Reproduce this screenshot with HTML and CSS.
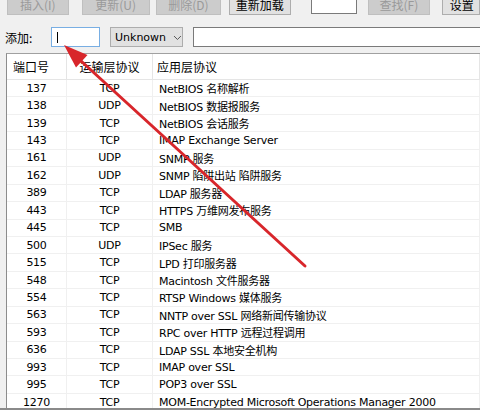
FILE: index.html
```html
<!DOCTYPE html>
<html>
<head>
<meta charset="utf-8">
<link rel="stylesheet" href="styles.css">
</head>
<body>
<div class="frame">
  <div class="toolbar">
    <div class="btn dis b1">插入(I)</div>
    <div class="btn dis b2">更新(U)</div>
    <div class="btn dis b3">删除(D)</div>
    <div class="btn b4">重新加载</div>
    <div class="tinput"></div>
    <div class="btn dis b5">查找(F)</div>
    <div class="btn b6">设置</div>
  </div>
  <div class="addrow">
    <span class="lbl">添加:</span>
    <div class="field focus"><span class="caret"></span></div>
    <div class="select"><span>Unknown</span>
      <svg class="chev" width="9" height="6" viewBox="0 0 9 6"><path d="M1 1 L4.5 4.5 L8 1" fill="none" stroke="#555" stroke-width="1"/></svg>
    </div>
    <div class="field wide"></div>
  </div>
  <div class="list">
    <div class="row head">
      <div class="c1">端口号</div><div class="c2">运输层协议</div><div class="c3">应用层协议</div>
    </div>
    <div class="row"><div class="c1">137</div><div class="c2">TCP</div><div class="c3">NetBIOS 名称解析</div></div>
    <div class="row"><div class="c1">138</div><div class="c2">UDP</div><div class="c3">NetBIOS 数据报服务</div></div>
    <div class="row"><div class="c1">139</div><div class="c2">TCP</div><div class="c3">NetBIOS 会话服务</div></div>
    <div class="row"><div class="c1">143</div><div class="c2">TCP</div><div class="c3">IMAP Exchange Server</div></div>
    <div class="row"><div class="c1">161</div><div class="c2">UDP</div><div class="c3">SNMP 服务</div></div>
    <div class="row"><div class="c1">162</div><div class="c2">UDP</div><div class="c3">SNMP 陷阱出站 陷阱服务</div></div>
    <div class="row"><div class="c1">389</div><div class="c2">TCP</div><div class="c3">LDAP 服务器</div></div>
    <div class="row"><div class="c1">443</div><div class="c2">TCP</div><div class="c3">HTTPS 万维网发布服务</div></div>
    <div class="row"><div class="c1">445</div><div class="c2">TCP</div><div class="c3">SMB</div></div>
    <div class="row"><div class="c1">500</div><div class="c2">UDP</div><div class="c3">IPSec 服务</div></div>
    <div class="row"><div class="c1">515</div><div class="c2">TCP</div><div class="c3">LPD 打印服务器</div></div>
    <div class="row"><div class="c1">548</div><div class="c2">TCP</div><div class="c3">Macintosh 文件服务器</div></div>
    <div class="row"><div class="c1">554</div><div class="c2">TCP</div><div class="c3">RTSP Windows 媒体服务</div></div>
    <div class="row"><div class="c1">563</div><div class="c2">TCP</div><div class="c3">NNTP over SSL 网络新闻传输协议</div></div>
    <div class="row"><div class="c1">593</div><div class="c2">TCP</div><div class="c3">RPC over HTTP 远程过程调用</div></div>
    <div class="row"><div class="c1">636</div><div class="c2">TCP</div><div class="c3">LDAP SSL 本地安全机构</div></div>
    <div class="row"><div class="c1">993</div><div class="c2">TCP</div><div class="c3">IMAP over SSL</div></div>
    <div class="row"><div class="c1">995</div><div class="c2">TCP</div><div class="c3">POP3 over SSL</div></div>
    <div class="row"><div class="c1">1270</div><div class="c2">TCP</div><div class="c3">MOM-Encrypted Microsoft Operations Manager 2000</div></div>
  </div>
  <svg class="arrow" width="480" height="410" viewBox="0 0 480 410">
    <line x1="305" y1="266" x2="80" y2="60" stroke="#d8262b" stroke-width="3" stroke-linecap="round"/>
    <polygon points="64,45 87.5,55 76,67.5" fill="#d8262b"/>
  </svg>
</div>
</body>
</html>
```
FILE: styles.css
```css
html, body {
  margin: 0;
  padding: 0;
}
body {
  background: #f0f0f0;
  font-family: "DejaVu Sans", "Noto Sans CJK SC", sans-serif;
  font-size: 11px;
  color: #000;
}
.frame {
  position: relative;
  width: 480px;
  height: 408px;
  overflow: hidden;
  border-bottom: 2px solid #8a8a8a;
}
.toolbar {
  display: flex;
  align-items: flex-start;
  height: 23px;
  margin-top: -8px;
}
.btn {
  border: 1px solid #adadad;
  background: #e1e1e1;
  display: flex;
  align-items: center;
  justify-content: center;
  font-family: "Noto Sans CJK SC", sans-serif;
  font-size: 12px;
  line-height: 1;
  padding-top: 3px;
  box-sizing: border-box;
  height: 23px;
}
.btn.dis {
  background: #cccccc;
  border-color: #bfbfbf;
  color: #9a9a9a;
}
.b1 { margin-left: 7px; width: 65px; }
.b2 { margin-left: 13px; width: 72px; }
.b3 { margin-left: 6px; width: 69px; }
.b4 { margin-left: 8px; width: 65px; }
.b5 { margin-left: 11px; width: 65px; }
.b6 { margin-left: 12px; width: 40px; justify-content: flex-start; padding-left: 7px; }
.tinput {
  margin-left: 20px;
  width: 49px;
  height: 22px;
  box-sizing: border-box;
  background: #fff;
  border: 1px solid #7a7a7a;
}
.addrow {
  display: flex;
  align-items: center;
  height: 20px;
  margin-top: 12px;
}
.lbl {
  margin-left: 5px;
  width: 46px;
  font-family: "Noto Sans CJK SC", sans-serif;
  font-size: 12px;
}
.field {
  height: 20px;
  box-sizing: border-box;
  background: #fff;
  border: 1px solid #7a7a7a;
  position: relative;
}
.field.focus {
  width: 49px;
  border-color: #78aee3;
}
.caret {
  position: absolute;
  left: 5px;
  top: 4px;
  width: 1px;
  height: 11px;
  background: #000;
}
.select {
  margin-left: 10px;
  width: 73px;
  height: 20px;
  box-sizing: border-box;
  background: #e1e1e1;
  border: 1px solid #adadad;
  display: flex;
  align-items: center;
  padding-left: 4px;
  gap: 7px;
}
.chev { margin-top: 1px; }
.field.wide {
  margin-left: 10px;
  flex: 1;
  border-right: none;
}
.list {
  margin-top: 6px;
  margin-left: 6px;
  background: #fff;
  border-top: 1px solid #a0a0a0;
  border-left: 1px solid #8c8c8c;
  height: 400px;
}
.row {
  display: grid;
  grid-template-columns: 60px 86px 1fr;
  height: 17.45px;
  box-sizing: border-box;
  border-bottom: 1px solid #f0f0f0;
  align-items: center;
  white-space: nowrap;
  letter-spacing: -0.25px;
}
.row > div {
  height: 100%;
  display: flex;
  align-items: center;
  border-right: 1px solid #f0f0f0;
}
.c1, .c2 { justify-content: center; }
.c3 { padding-left: 6px; }
.row.head {
  height: 26px;
  border-bottom: 1px solid #e5e5e5;
  font-family: "Noto Sans CJK SC", sans-serif;
  font-size: 12px;
  letter-spacing: 0;
}
.row.head > div { border-right: 1px solid #e5e5e5; }
.row.head .c1 { justify-content: flex-start; padding-left: 6px; }
.row.head .c3 { padding-left: 4px; }
.arrow {
  position: absolute;
  left: 0;
  top: 0;
  pointer-events: none;
}
```
